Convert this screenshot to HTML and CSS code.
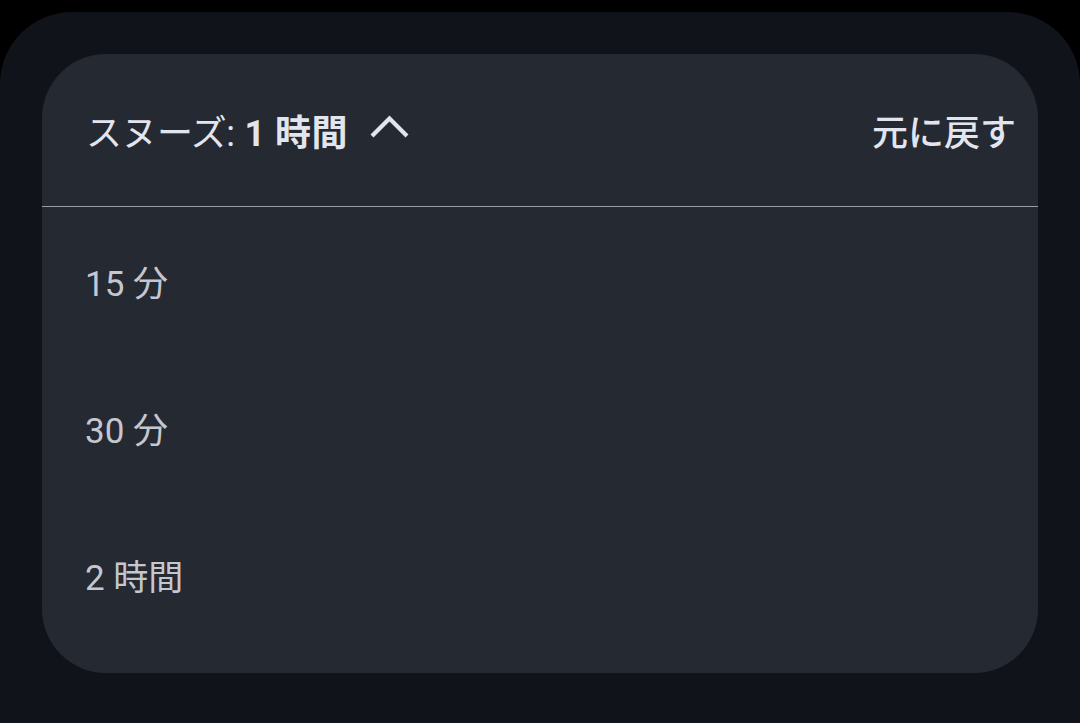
FILE: index.html
```html
<!DOCTYPE html>
<html lang="ja">
<head>
<meta charset="utf-8">
<link rel="stylesheet" href="styles.css">
</head>
<body>
<div class="sheet">
  <div class="card">
    <div class="header">
      <div class="title">
        <span class="label">スヌーズ:</span>
        <span class="value">1 時間</span>
        <svg class="chevron" width="40" height="26" viewBox="0 0 40 26">
          <path d="M2 22 L19.5 4.5 L37 22" fill="none" stroke="#e3e5ee" stroke-width="4.2"/>
        </svg>
      </div>
      <div class="undo">元に戻す</div>
    </div>
    <div class="divider"></div>
    <ul class="options">
      <li class="option">15 分</li>
      <li class="option">30 分</li>
      <li class="option">2 時間</li>
    </ul>
  </div>
</div>
</body>
</html>
```

FILE: styles.css
```css
html, body {
  margin: 0;
  padding: 0;
  background: #000;
  width: 1080px;
  height: 723px;
  overflow: hidden;
  font-family: Roboto, "Noto Sans CJK JP", sans-serif;
}

.sheet {
  margin-top: 12px;
  height: 711px;
  background: #10131a;
  border-radius: 72px 72px 0 0;
  padding: 42px 42px 0 42px;
  box-sizing: border-box;
}

.card {
  background: #252932;
  border-radius: 64px;
  height: 619px;
  display: flex;
  flex-direction: column;
}

.header {
  height: 152px;
  display: flex;
  align-items: center;
  justify-content: space-between;
  padding: 0 22px 0 44px;
  color: #e3e5ee;
  font-size: 36px;
}

.title {
  display: flex;
  align-items: center;
}

.label {
  font-weight: 400;
  letter-spacing: -0.5px;
}

.value {
  font-weight: 700;
  margin-left: 10px;
  letter-spacing: 0.5px;
}

.chevron {
  margin-left: 22px;
  margin-top: -6px;
}

.undo {
  font-weight: 500;
}

.divider {
  height: 1px;
  background: #9a9ca3;
}

.options {
  list-style: none;
  margin: 0;
  padding: 0;
}

.option {
  height: 147px;
  display: flex;
  align-items: center;
  padding-left: 43px;
  color: #c4c7cf;
  font-size: 35px;
  font-weight: 400;
}
```
